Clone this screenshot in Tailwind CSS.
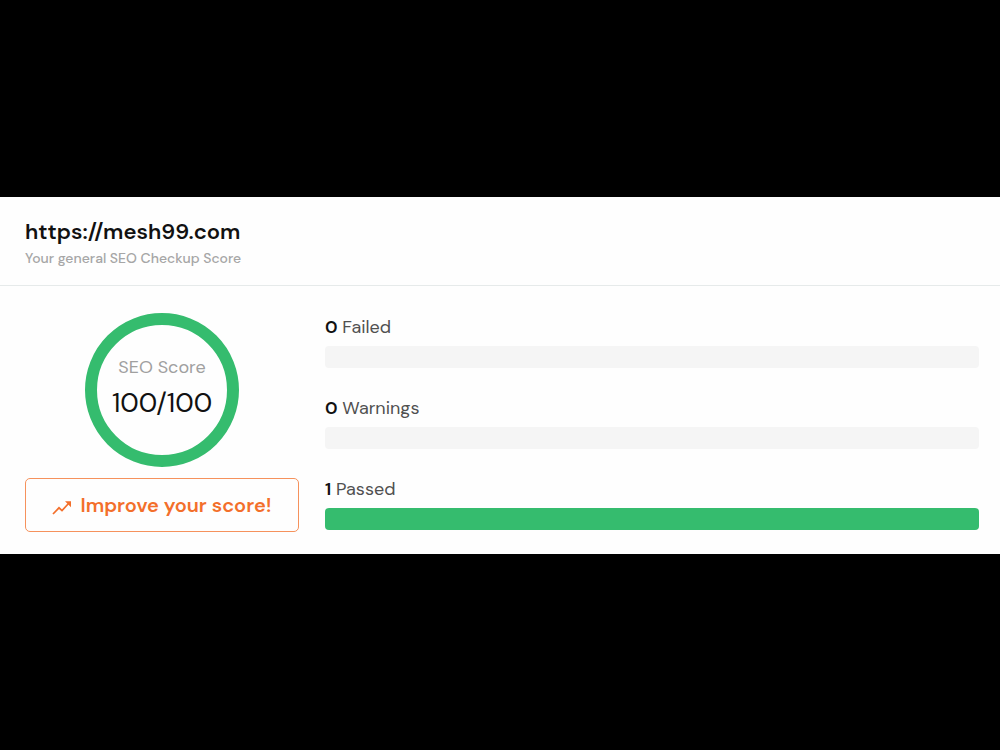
<!DOCTYPE html>
<html lang="en">
  <head>
    <meta charset="UTF-8" />
    <meta name="viewport" content="width=device-width, initial-scale=1.0" />
    <title>SEO Checkup - mesh99.com</title>
    <script src="https://cdn.jsdelivr.net/npm/@tailwindcss/browser@4"></script>
  </head>
  <body class="bg-black min-h-screen font-['DM_Sans','Inter',sans-serif]">
    <main class="pt-[197px]">
      <section class="bg-[#fefefe]">
        <header class="px-[25px] pt-[21px] pb-[17px] border-b border-[#e6eaea]">
          <h1 class="text-[22px] leading-[28px] font-semibold text-[#111]">
            https://mesh99.com
          </h1>
          <p
            class="mt-[2px] text-[14px] leading-[20px] font-medium text-[#a6a6a6]"
          >
            Your general SEO Checkup Score
          </p>
        </header>

        <div class="flex gap-[26px] pl-[25px] pr-[21px] pt-[27px] pb-[22px]">
          <!-- Score -->
          <div class="w-[274px] shrink-0 flex flex-col items-center gap-[11px]">
            <div
              class="w-[154px] h-[154px] rounded-full border-[12px] border-[#35bc6e] flex flex-col items-center pt-[30px]"
            >
              <p class="text-[18px] leading-[24px] text-[#a0a0a0]">SEO Score</p>
              <p class="mt-[6px] text-[27px] leading-[36px] text-[#111]">
                100/100
              </p>
            </div>
            <button
              type="button"
              class="w-full h-[54px] rounded-[5px] border border-[#f6925c] text-[#f36f2b] flex items-center justify-center gap-2 cursor-pointer"
            >
              <svg
                class="w-5 h-5 mt-1"
                viewBox="0 0 20 20"
                fill="none"
                stroke="currentColor"
                stroke-width="1.7"
                aria-hidden="true"
              >
                <path d="M1 17L7 10.8L10 13.6L16.5 6.5" />
                <path d="M13 4.2H19V10.2Z" fill="currentColor" stroke="none" />
              </svg>
              <span class="text-[20px] leading-[28px] font-semibold"
                >Improve your score!</span
              >
            </button>
          </div>

          <!-- Results -->
          <div class="flex-1 flex flex-col gap-7 pt-[2px]">
            <div>
              <p class="text-[18px] leading-[24px] text-[#505050]">
                <b class="font-semibold text-[#111]">0</b> Failed
              </p>
              <div class="mt-[7px] h-[22px] rounded bg-[#f5f5f5]"></div>
            </div>
            <div>
              <p class="text-[18px] leading-[24px] text-[#505050]">
                <b class="font-semibold text-[#111]">0</b> Warnings
              </p>
              <div class="mt-[7px] h-[22px] rounded bg-[#f5f5f5]"></div>
            </div>
            <div>
              <p class="text-[18px] leading-[24px] text-[#505050]">
                <b class="font-semibold text-[#111]">1</b> Passed
              </p>
              <div class="mt-[7px] h-[22px] rounded bg-[#f5f5f5]">
                <div class="h-full rounded bg-[#35bc6e]" style="width: 100%"></div>
              </div>
            </div>
          </div>
        </div>
      </section>
    </main>
  </body>
</html>
